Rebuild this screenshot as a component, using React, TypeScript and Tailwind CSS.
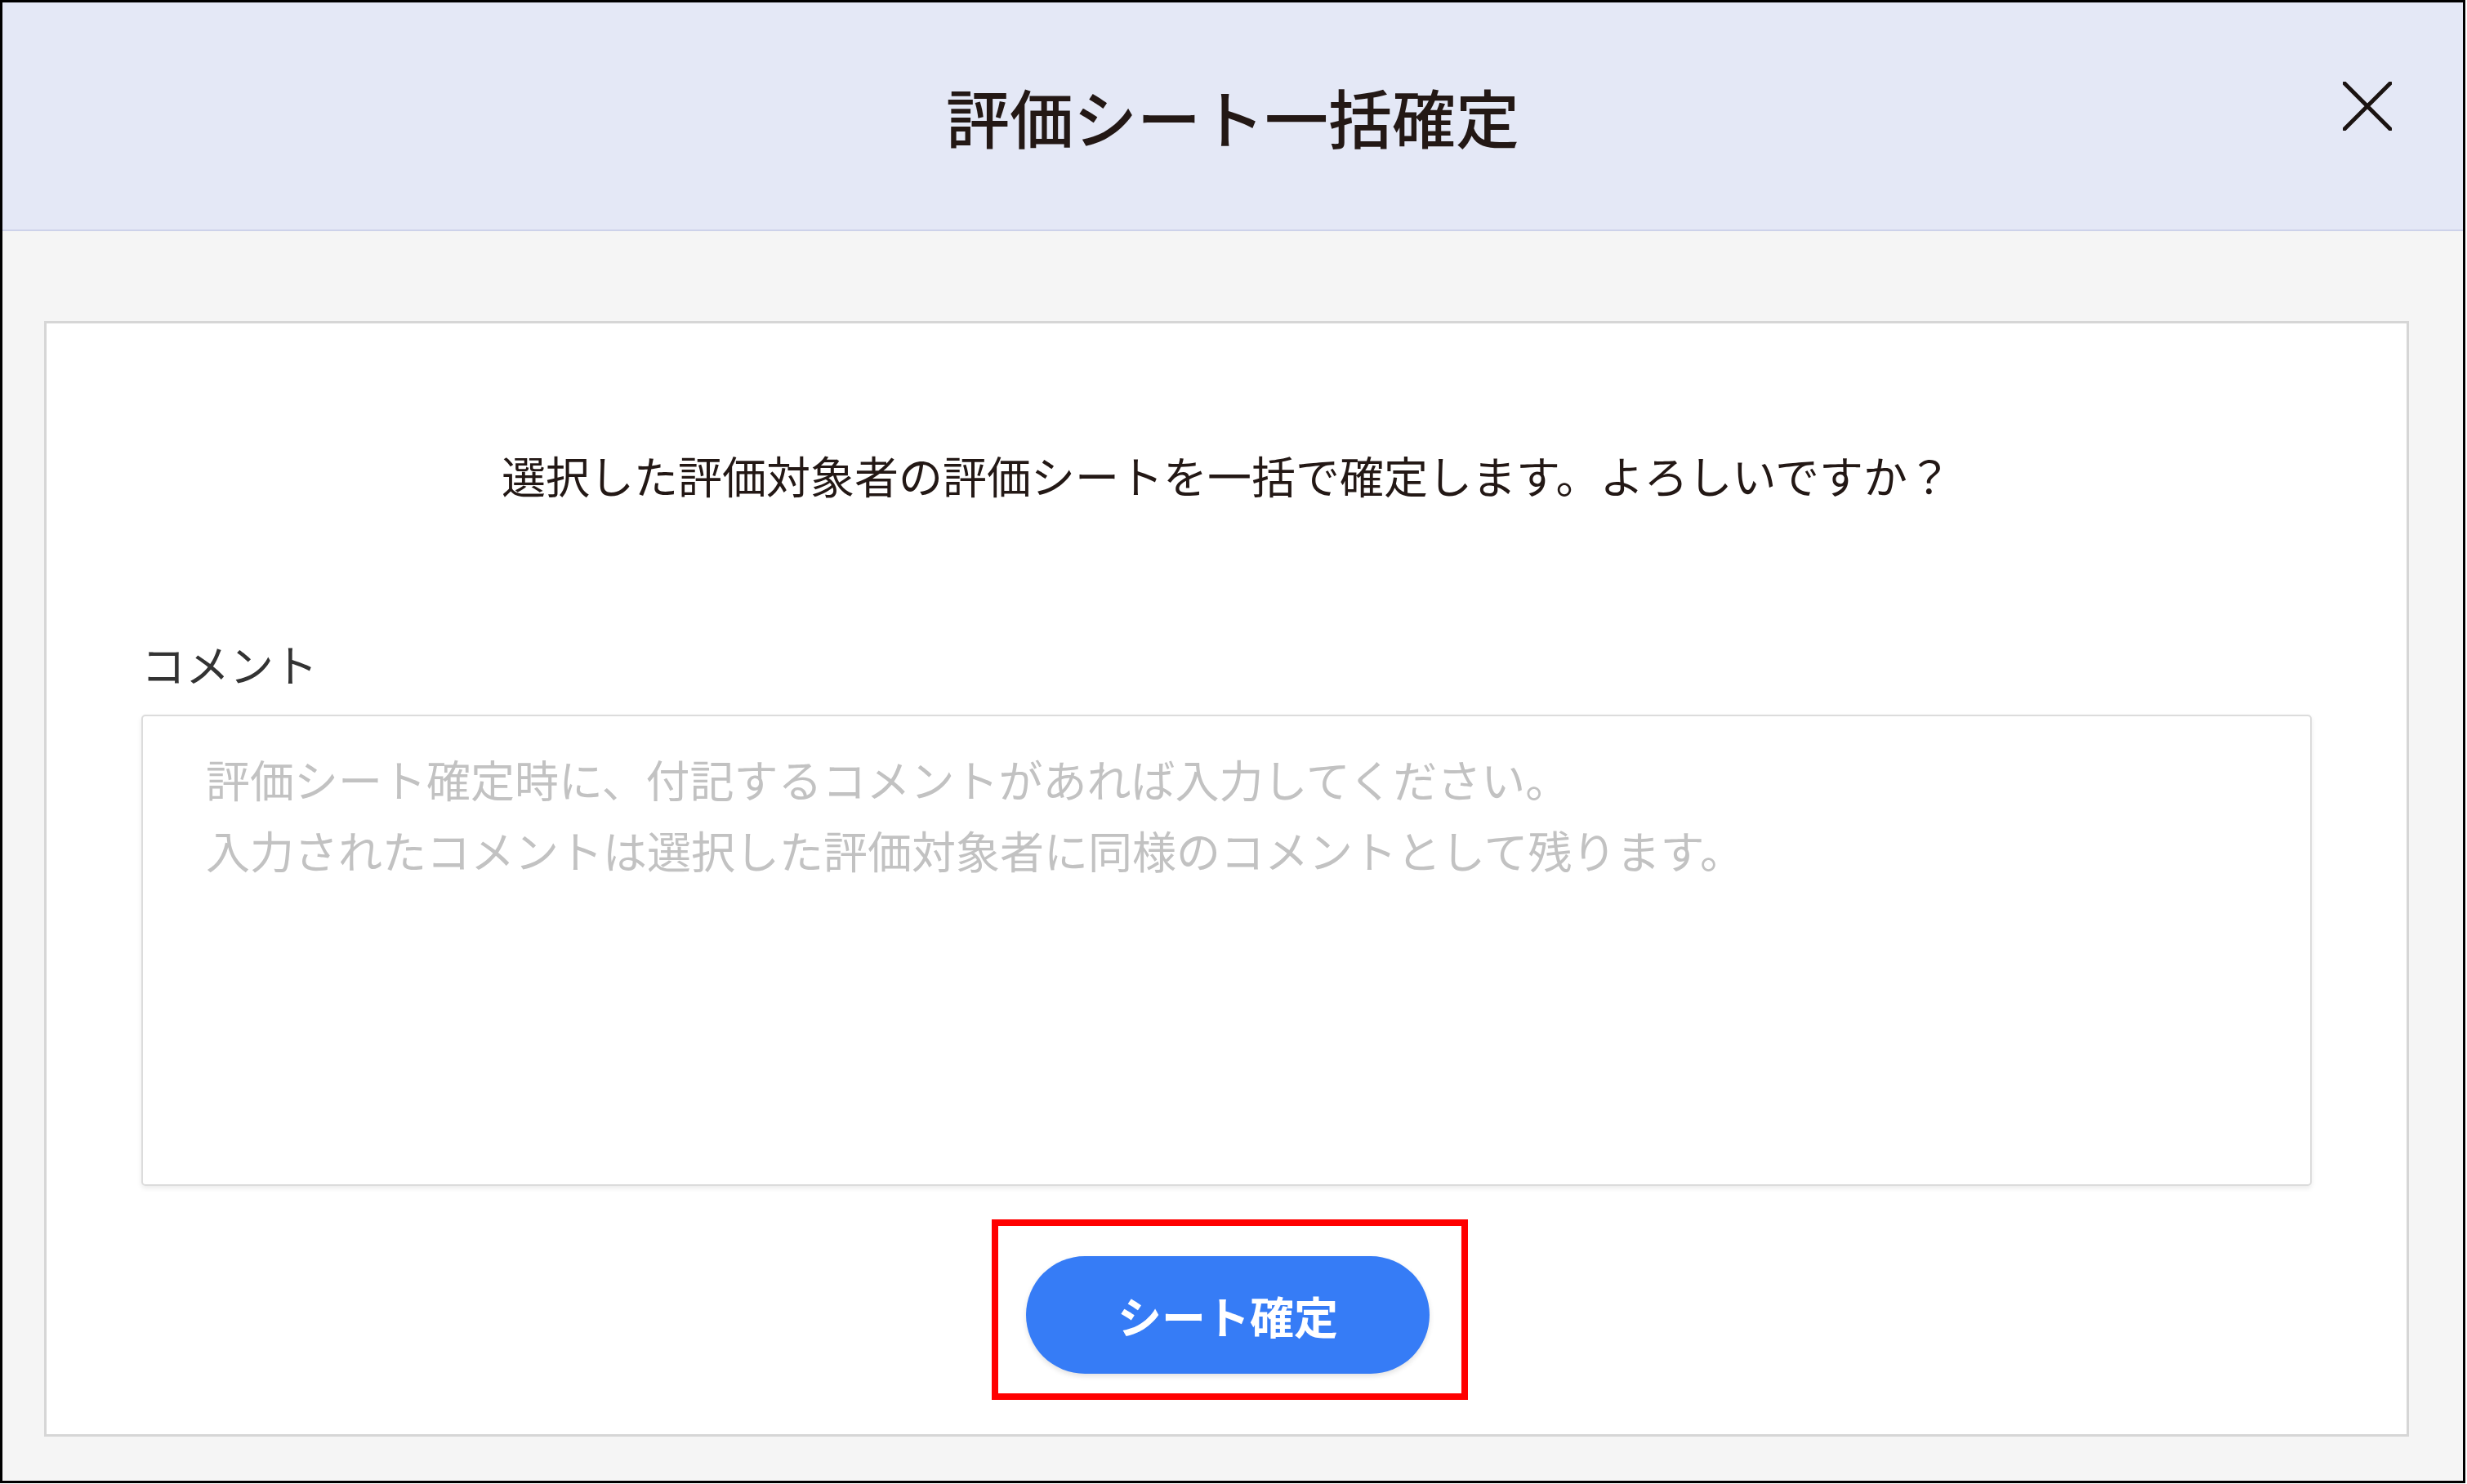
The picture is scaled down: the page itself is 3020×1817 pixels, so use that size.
import React from "react";

const FONT = "font-['Noto_Sans_CJK_JP','Noto_Sans',sans-serif]";

function CloseIcon() {
  return (
    <svg viewBox="0 0 60 60" className="w-[60px] h-[60px]" fill="none">
      <path d="M2 2L58 58M58 2L2 58" stroke="#1a1311" strokeWidth="5" strokeLinecap="round" />
    </svg>
  );
}

export default function App() {
  return (
    <div className={`w-[3020px] h-[1817px] bg-white ${FONT}`}>
      <div className="w-[3018px] h-[1816px] border-[3px] border-black flex flex-col">
        {/* Header */}
        <div className="relative h-[280px] shrink-0 bg-[#e4e8f6] border-b-2 border-[#cdd2ea] flex items-center justify-center">
          <h1 className="text-[78px] leading-none font-medium text-[#231815]">評価シート一括確定</h1>
          <button className="absolute right-[87px] top-[97px]">
            <CloseIcon />
          </button>
        </div>

        {/* Body */}
        <div className="flex-1 flex bg-[#f5f5f5] pl-[51px] pr-[66px] pt-[110px] pb-[54px]">
          <div className="flex-1 flex flex-col bg-white border-[3px] border-[#d6d6d6] pt-[146px] px-[116px]">
            <p className="text-center text-[54px] leading-[80px] text-[#231815]">
              選択した評価対象者の評価シートを一括で確定します。よろしいですか？
            </p>

            <label className="mt-[151px] text-[54px] leading-[80px] text-[#333333]">コメント</label>
            <textarea
              className={`mt-[22px] h-[577px] shrink-0 resize-none rounded-[5px] border-2 border-[#dcdcdc] bg-white pl-[77px] pt-[33px] text-[54px] leading-[87px] text-[#333333] placeholder:text-[#c2c2c2] shadow-[0_3px_6px_rgba(0,0,0,0.08)] outline-none ${FONT}`}
              placeholder={"評価シート確定時に、付記するコメントがあれば入力してください。\n入力されたコメントは選択した評価対象者に同様のコメントとして残ります。"}
            />

            <div className="mt-[41px] ml-[8px] self-center w-[583px] h-[221px] border-8 border-[#ff0000] pl-[34px] pt-[37px]">
              <button className="w-[494px] h-[144px] rounded-full bg-[#367cf6] text-white text-[54px] font-bold shadow-[0_3px_6px_rgba(0,0,0,0.12)]">
                シート確定
              </button>
            </div>
          </div>
        </div>
      </div>
    </div>
  );
}
